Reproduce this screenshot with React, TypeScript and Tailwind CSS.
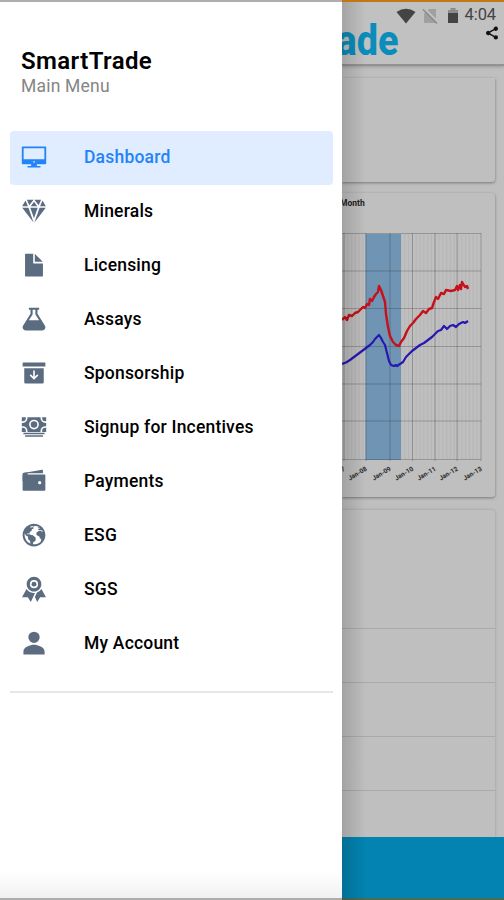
import type { IconType } from "react-icons";
import {
  IoArchiveSharp,
  IoCashSharp,
  IoDesktopSharp,
  IoDiamondSharp,
  IoDocumentSharp,
  IoEarthSharp,
  IoFlaskSharp,
  IoPersonSharp,
  IoRibbonSharp,
  IoShareSocialSharp,
  IoWalletSharp,
} from "react-icons/io5";

const menu: { label: string; icon: IconType }[] = [
  { label: "Dashboard", icon: IoDesktopSharp },
  { label: "Minerals", icon: IoDiamondSharp },
  { label: "Licensing", icon: IoDocumentSharp },
  { label: "Assays", icon: IoFlaskSharp },
  { label: "Sponsorship", icon: IoArchiveSharp },
  { label: "Signup for Incentives", icon: IoCashSharp },
  { label: "Payments", icon: IoWalletSharp },
  { label: "ESG", icon: IoEarthSharp },
  { label: "SGS", icon: IoRibbonSharp },
  { label: "My Account", icon: IoPersonSharp },
];

const years = [
  { x: 2, label: "Jan-07" },
  { x: 24, label: "Jan-08" },
  { x: 48, label: "Jan-09" },
  { x: 70.5, label: "Jan-10" },
  { x: 93, label: "Jan-11" },
  { x: 115, label: "Jan-12" },
  { x: 139, label: "Jan-13" },
];

const rows = [40.5, 78, 115.5, 153.5, 191, 228, 266.5];

function Chart() {
  return (
    <svg viewBox="0 0 153 303" className="block h-[303px] w-[153px]">
      <text x="-2" y="13" className="fill-[#222] font-['Roboto'] text-[8.500px] font-bold">
        Month
      </text>
      {/* months */}
      {Array.from({ length: 36 }, (_, i) => (
        <line key={i} x1={2 + i * 3.8} x2={2 + i * 3.8} y1="41" y2="266" stroke="#b4b4b4" strokeWidth="0.8" />
      ))}
      <rect x="23.5" y="41" width="35.5" height="226" fill="#7094b4" />
      {rows.map((y) => (
        <line key={y} x1="0" x2="139" y1={y} y2={y} stroke="#222" strokeOpacity="0.26" />
      ))}
      {years.map((year) => (
        <g key={year.label}>
          <line x1={year.x} x2={year.x} y1="40" y2="268" stroke="#222" strokeOpacity="0.26" />
          <text
            transform={`translate(${year.x + 1.5} 277) rotate(-31)`}
            textAnchor="end"
            className="fill-[#2a2a2a] font-['Roboto'] text-[6.500px] font-bold"
          >
            {year.label}
          </text>
        </g>
      ))}
      <polyline
        points="0,171 4,169.5 8,167 12,164 16,161 20,158 24,155 28,152 31,149 33,146 35,144 37,142 39,145 41,149 43,152 45,160 47,168 49,172 52,173 54,172 55,173 58,171 61,169 64,164 67,161 70,158 74,155 78,152 82,150 86,147 90,144 93,141 96,138 99,137 102,133 105,136 108,133 111,132 114,134 117,131 121,129 123,130 126,128"
        fill="none"
        stroke="#2618b0"
        strokeWidth="2.200"
        strokeLinejoin="round"
      />
      <polyline
        points="0,127 3,124 5,127 7,122 10,123 13,120 16,119 19,116 21,114 23,115 25,111 27,112 28,106 30,108 32,104 34,101 36,99 37,93 39,97 41,103 43,109 44,121 46,134 48,143 51,149 54,152 57,153 59,149 62,145 65,138 68,133 71,130 74,126 78,122 81,118 84,120 87,116 90,115 92,109 94,104 96,106 99,100 102,101 104,97 109,98 113,97 115,93 116,97 118,92 119,96 120,89 123,94 125,93 126,96"
        fill="none"
        stroke="#c5111a"
        strokeWidth="2.400"
        strokeLinejoin="round"
      />
    </svg>
  );
}

function StatusBar() {
  return (
    <div className="flex h-[27px] items-center justify-end pr-[8px] text-[#444]">
      <svg viewBox="0 0 20 16" className="h-4 w-5 fill-current">
        <path d="M0.500 4Q10-2.500 19.500 4L10 15.500Z" />
      </svg>
      <svg viewBox="0 0 16 16" className="ml-[6px] h-4 w-4">
        <path d="M7 1H14V15H2V6Z" fill="#a0a0a0" />
        <path d="M2 0L16 14" stroke="#c1c1c1" strokeWidth="2" />
        <path d="M1 1.500L15 15.500" stroke="#8b8b8b" strokeWidth="1.500" />
      </svg>
      <svg viewBox="0 0 12 17" className="ml-[9px] h-[17px] w-3">
        <path d="M3.500 1h5v2H11v3H1V3h2.500Z" fill="#8c8c8c" />
        <path d="M1 6h10v10H1Z" fill="#444" />
      </svg>
      <span className="ml-[6px] text-[16.500px] leading-none tracking-[-0.1px]">4:04</span>
    </div>
  );
}

function Drawer() {
  return (
    <aside className="flex w-[342px] shrink-0 flex-col border-t-2 border-b-2 border-[#aeaeae] bg-white">
      <header className="pt-[45px] pl-[21px]">
        <h1 className="text-[24px] leading-7 font-semibold tracking-[0.4px] text-black">SmartTrade</h1>
        <p className="-mt-px text-[17.500px] leading-6 tracking-[0.2px] text-[#858585]">Main Menu</p>
      </header>
      <nav className="mx-[9.500px] mt-[32.500px] border-b-2 border-[#e6e6e6] pb-[20px]">
        {menu.map(({ label, icon: Icon }, i) => (
          <a
            key={label}
            className={
              i === 0
                ? "flex h-[54px] items-center rounded bg-[#e0ecff] pl-[11.500px] text-[#2383f8]"
                : "flex h-[54px] items-center pl-[11.500px] text-black"
            }
          >
            <Icon className={i === 0 ? "mb-px h-[26px] w-[26px]" : "mb-px h-[26px] w-[26px] text-[#5b6c80]"} />
            <span className="ml-[37px] text-[17.500px] font-medium tracking-[0.2px]">{label}</span>
          </a>
        ))}
      </nav>
      <div className="mt-auto h-[26px] bg-linear-to-b from-white to-[#f1f1f1]" />
    </aside>
  );
}

export default function App() {
  return (
    <div className="flex h-[900px] w-[504px] overflow-hidden bg-[#bfbfbf] font-['Roboto',sans-serif]">
      <Drawer />
      <main className="relative flex w-[162px] flex-col overflow-hidden border-t-2 border-[#c07714]">
        <header className="h-[64px] shrink-0 border-b-2 border-[#929292] bg-[#c1c1c1] shadow-[0_1px_3px_#999]">
          <StatusBar />
          <div className="flex h-[35px] justify-between">
            <div className="flex w-[56px] justify-end">
              <span className="-mt-[11px] origin-right scale-x-[0.88] text-[43px] leading-[44px] font-extrabold text-[#0a8dbb]">
                ade
              </span>
            </div>
            <IoShareSocialSharp className="mt-[-4px] mr-1 h-4 w-4 text-[#111]" />
          </div>
        </header>
        <section className="mt-3 mr-[9px] h-[104px] shrink-0 rounded-br-[3px] shadow-[0_1px_3px_#777]" />
        <section className="mt-[11px] mr-[9px] h-[304px] shrink-0 rounded-r-[3px] shadow-[0_1px_3px_#777]">
          <Chart />
        </section>
        <section className="mt-[13px] mr-[9px] flex-1 rounded-tr-[3px] shadow-[0_0_3px_#999]">
          <div className="h-[119px] border-b border-[#aaa]" />
          <div className="h-[54px] border-b border-[#aaa]" />
          <div className="h-[54px] border-b border-[#aaa]" />
          <div className="h-[54px] border-b border-[#aaa]" />
        </section>
        <footer className="relative h-[63px] shrink-0 border-b-2 border-[#4c6b53] bg-[#0283b1]" />
        {/* drawer shadow */}
        <div className="absolute inset-y-0 left-0 w-6 bg-linear-to-r from-black/15 to-transparent" />
      </main>
    </div>
  );
}
